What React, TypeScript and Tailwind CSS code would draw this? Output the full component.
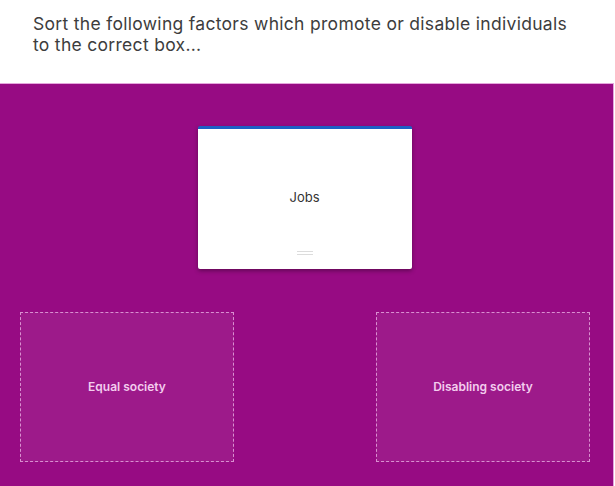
export default function App() {
  return (
    <div className="w-[615px] h-[486px] bg-white overflow-hidden" style={{ fontFamily: 'Inter, "Noto Sans", sans-serif' }}>
      <div className="h-[83px] pl-[33px] pt-[13px]">
        <h1 className="text-[17.5px] leading-[21px] text-[#3d3d3d] font-normal tracking-[0.3px]">
          Sort the following factors which promote or disable individuals
          <br />
          to the correct box...
        </h1>
      </div>
      <div className="w-[614px] h-[403px] bg-[#970b83] border-t border-r border-[#e4a6dc] flex flex-col">
        <div className="flex justify-center pt-[42px] pr-[4px]">
          <div className="w-[214px] h-[143px] bg-white border-t-[3px] border-[#1d5fc4] rounded-[2px] shadow-[0_2px_4px_rgba(0,0,0,0.35)] flex flex-col items-center">
            <div className="flex-1 flex items-center justify-center pt-[16px]">
              <span className="text-[13px] text-[#333]">Jobs</span>
            </div>
            <div className="flex flex-col gap-[2px] pb-[14px]">
              <div className="w-[16px] h-px bg-[#dcdcdc]" />
              <div className="w-[16px] h-px bg-[#dcdcdc]" />
            </div>
          </div>
        </div>
        <div className="flex justify-between px-[20px] pt-[43px] pr-[23px]">
          <div className="w-[214px] h-[150px] bg-[#9d1a8a] border border-dashed border-[#d98fd0] flex items-center justify-center">
            <span className="text-[12px] font-semibold text-[#f3cdee]">Equal society</span>
          </div>
          <div className="w-[214px] h-[150px] bg-[#9d1a8a] border border-dashed border-[#d98fd0] flex items-center justify-center">
            <span className="text-[12px] font-semibold text-[#f3cdee]">Disabling society</span>
          </div>
        </div>
      </div>
    </div>
  );
}
